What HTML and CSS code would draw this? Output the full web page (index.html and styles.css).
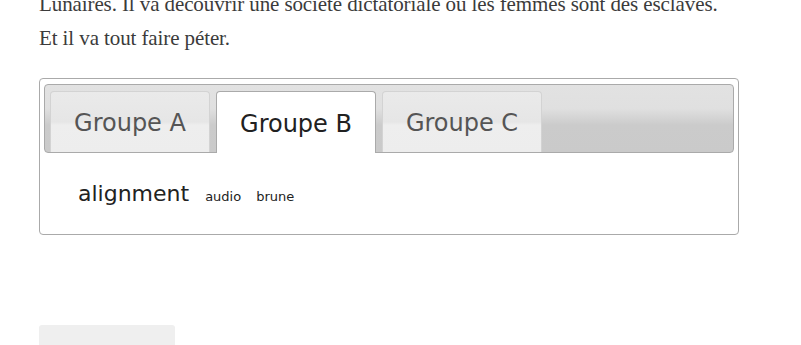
FILE: index.html
```html
<!DOCTYPE html>
<html lang="fr">
<head>
    <meta charset="UTF-8">
    <title>Groupes</title>
    <link rel="stylesheet" href="styles.css">
</head>
<body>
    <div class="page">
        <p class="story">Lunaires. Il va découvrir une société dictatoriale où les femmes sont des esclaves.<br>Et il va tout faire péter.</p>

        <!-- Tabs -->
        <div class="tabs">
            <ul class="tab-nav">
                <li class="tab">Groupe A</li>
                <li class="tab active">Groupe B</li>
                <li class="tab">Groupe C</li>
            </ul>
            <div class="tab-panel">
                <span class="word big">alignment</span>
                <span class="word">audio</span>
                <span class="word">brune</span>
            </div>
        </div>

        <div class="next-box"></div>
    </div>
</body>
</html>
```
FILE: styles.css
```css
body {
    margin: 0;
    padding: 0;
    background-color: #fff;
}
.page {
    padding-left: 39px;
    width: 700px;
}
.story {
    font-family: "Liberation Serif", serif;
    font-size: 21px;
    line-height: 34px;
    color: #3b3b3b;
    margin: -13px 0 0 0;
    letter-spacing: -0.1px;
}
.tabs {
    margin-top: 23px;
    border: 1px solid #aaa;
    border-radius: 4px;
    padding: 5px 4px 4px 4px;
    font-family: "DejaVu Sans", Verdana, sans-serif;
}
.tab-nav {
    list-style: none;
    margin: 0;
    padding: 6px 5px 0 5px;
    display: flex;
    gap: 6px;
    border: 1px solid #aaa;
    border-radius: 4px;
    background: linear-gradient(to bottom, #e2e2e2 0%, #e0e0e0 35%, #cbcbcb 60%, #cacaca 100%);
    height: 61px;
}
.tab {
    width: 160px;
    height: 61px;
    box-sizing: border-box;
    border: 1px solid #d3d3d3;
    border-bottom: none;
    border-radius: 4px 4px 0 0;
    background: linear-gradient(to bottom, #eaeaea 0%, #e6e6e6 50%, #eeeeee 55%, #ededed 100%);
    color: #555;
    font-size: 24px;
    display: flex;
    align-items: center;
    justify-content: center;
    padding-top: 2px;
    margin-bottom: -1px;
}
.tab.active {
    background: #fff;
    border-color: #aaa;
    color: #212121;
    height: 62px;
}
.tab-panel {
    padding: 28px 34px 24px 34px;
    color: #222;
    display: flex;
    align-items: baseline;
    gap: 15px;
}
.word {
    font-size: 13px;
}
.word.big {
    font-size: 22px;
    margin-right: 1px;
}
.next-box {
    margin-top: 90px;
    width: 136px;
    height: 30px;
    background-color: #efefef;
    border-radius: 3px 3px 0 0;
}
```
